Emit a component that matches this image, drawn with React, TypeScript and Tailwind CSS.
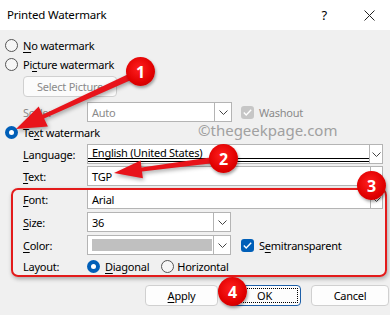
import React from "react";

type P = { children?: React.ReactNode };

const Chevron = () => (
  <svg width="9" height="5" viewBox="0 0 9 5">
    <polyline points="0.5,0.5 4.5,4.5 8.5,0.5" fill="none" stroke="#444" strokeWidth="1" />
  </svg>
);

const Check = () => (
  <svg width="9" height="7" viewBox="0 0 9 7">
    <polyline points="0.8,3.6 3.2,6 8.2,0.8" fill="none" stroke="#fff" strokeWidth="1.4" />
  </svg>
);

function Radio({ checked }: { checked?: boolean }) {
  if (checked)
    return (
      <span className="w-[13px] h-[13px] rounded-full bg-[#005fb8] flex items-center justify-center shrink-0">
        <span className="w-[5px] h-[5px] rounded-full bg-white" />
      </span>
    );
  return <span className="block w-[13px] h-[13px] rounded-full border border-[#555] bg-[#f6f6f6] shrink-0" />;
}

function Combo({ w, arrowW = 17, disabled, children }: P & { w: string; arrowW?: number; disabled?: boolean }) {
  return (
    <div className={`flex h-full ${w}`}>
      <div className={`flex-1 flex items-center border border-[#b4b4b4] bg-white pl-[4px] ${disabled ? "text-[#8a8a8a]" : "text-black"}`}>
        {children}
      </div>
      <div
        className={`-ml-px flex items-center justify-center border border-[#b4b4b4] bg-white ${arrowW === 13 ? "w-[13px]" : "w-[18px]"}`}
      >
        <Chevron />
      </div>
    </div>
  );
}

function Row({ label, children, className = "" }: P & { label: React.ReactNode; className?: string }) {
  return (
    <div className={`flex items-center h-[20px] pl-[18px] ${className}`}>
      <span className="w-[64px] shrink-0">{label}</span>
      {children}
    </div>
  );
}

const U = ({ children }: P) => <span className="underline underline-offset-2">{children}</span>;

function arrow(x1: number, y1: number, x2: number, y2: number, w1: number, w2: number, hl: number, hw: number) {
  const L = Math.hypot(x2 - x1, y2 - y1);
  const ux = (x2 - x1) / L, uy = (y2 - y1) / L;
  const nx = -uy, ny = ux;
  const bx = x2 - ux * hl, by = y2 - uy * hl;
  const p = (x: number, y: number) => `${x.toFixed(1)},${y.toFixed(1)}`;
  return [
    p(x1 + nx * w1, y1 + ny * w1),
    p(bx + nx * w2, by + ny * w2),
    p(bx + nx * hw, by + ny * hw),
    p(x2, y2),
    p(bx - nx * hw, by - ny * hw),
    p(bx - nx * w2, by - ny * w2),
    p(x1 - nx * w1, y1 - ny * w1),
  ].join(" ");
}

function Badge({ n, className }: { n: number; className: string }) {
  return (
    <div
      className={`absolute w-[29px] h-[29px] rounded-full bg-[radial-gradient(circle_at_45%_40%,#ff2020,#e00000_60%,#b80000)] shadow-[1px_2px_3px_rgba(0,0,0,0.35)] flex items-center justify-center text-white text-[16px] font-bold ${className}`}
    >
      {n}
    </div>
  );
}

export default function App() {
  return (
    <div className="relative w-[390px] h-[315px] overflow-hidden bg-[#f0f0f0] font-['Noto_Sans',sans-serif] text-[11px] tracking-[-0.25px] text-black leading-none">
      {/* title bar */}
      <div className="h-[30px] bg-white flex items-center pl-[7px]">
        <span className="text-[11.5px] tracking-[-0.2px]">Printed Watermark</span>
        <span className="ml-auto text-[13px] mr-[37px]">?</span>
        <svg width="11" height="11" viewBox="0 0 11 11" className="mr-[15px]">
          <path d="M0.5 0.5 L10.5 10.5 M10.5 0.5 L0.5 10.5" stroke="#222" strokeWidth="1" />
        </svg>
      </div>

      <div className="pl-[5px] pt-[6px]">
        <div className="flex items-center gap-[5px] h-[19px]">
          <Radio />
          <span><U>N</U>o watermark</span>
        </div>
        <div className="flex items-center gap-[5px] h-[19px]">
          <Radio />
          <span>Pi<U>c</U>ture watermark</span>
        </div>
        <div className="pl-[18px] mt-[2px] h-[21px]">
          <div className="w-[94px] h-full rounded-[4px] border border-[#d0d0d0] bg-[#fbfbfb] text-[#8a8a8a] flex items-center justify-center">
            Select Picture
          </div>
        </div>
        <Row label={<span className="text-[#8a8a8a]">Sca<U>l</U>e:</span>} className="mt-[5px]">
          <Combo w="w-[145px]" disabled>Auto</Combo>
          <span className="ml-[9px] w-[13px] h-[13px] rounded-[3px] bg-[#c6c6c6] flex items-center justify-center">
            <Check />
          </span>
          <span className="ml-[5px] text-[#8a8a8a]">Washout</span>
        </Row>
        <div className="flex items-center gap-[5px] h-[20px]">
          <Radio checked />
          <span>Te<U>x</U>t watermark</span>
        </div>
        <Row label={<><U>L</U>anguage:</>} className="mt-[2px]">
          <div className="relative flex h-full w-[296px]">
            <div className="flex-1 flex items-center border border-[#b4b4b4] bg-white pl-[4px] pb-[3px]">
              English (United States)
            </div>
            <div className="absolute left-[1px] right-[14px] bottom-[2px] h-[4px] border-t border-b border-black" />
            <div className="-ml-px w-[14px] flex items-center justify-center border border-[#b4b4b4] bg-white">
              <Chevron />
            </div>
          </div>
        </Row>
        <Row label={<><U>T</U>ext:</>} className="mt-[2px]">
          <Combo w="w-[296px]" arrowW={13}>TGP</Combo>
        </Row>
        <Row label={<><U>F</U>ont:</>} className="mt-[3px]">
          <Combo w="w-[296px]" arrowW={13}>Arial</Combo>
        </Row>
        <Row label={<><U>S</U>ize:</>} className="mt-[3px]">
          <Combo w="w-[144px]">36</Combo>
        </Row>
        <Row label={<><U>C</U>olor:</>} className="mt-[3px]">
          <Combo w="w-[144px]">
            <span className="block h-[12px] w-[120px] bg-[#c0c0c0]" />
          </Combo>
          <span className="ml-[10px] w-[13px] h-[13px] rounded-[3px] bg-[#005fb8] flex items-center justify-center">
            <Check />
          </span>
          <span className="ml-[5px]">S<U>e</U>mitransparent</span>
        </Row>
        <Row label="Layout:" className="h-[22px]">
          <Radio checked />
          <span className="ml-[5px]"><U>D</U>iagonal</span>
          <span className="ml-[12px]"><Radio /></span>
          <span className="ml-[3px]">Horizontal</span>
        </Row>
        <div className="flex mt-[8px] h-[21px] pl-[140px] gap-[10px]">
          <div className="w-[73px] rounded-[4px] border border-[#d0d0d0] bg-[#fdfdfd] flex items-center justify-center">
            <U>A</U>pply
          </div>
          <div className="w-[73px] rounded-[4px] border border-[#1d5fa8] bg-[#fdfdfd] p-[2px]">
            <div className="h-full border border-dotted border-black flex items-center justify-center">OK</div>
          </div>
          <div className="w-[78px] rounded-[4px] border border-[#d0d0d0] bg-[#fdfdfd] flex items-center justify-center">
            Cancel
          </div>
        </div>
      </div>

      {/* annotations */}
      <span className="absolute left-[198px] top-[123px] text-[15px] tracking-normal text-[#a0a0a0]">
        ©thegeekpage.com
      </span>
      <div className="absolute left-[11px] top-[188px] w-[376px] h-[89px] rounded-[7px] border-2 border-[#e31b1b] shadow-[1px_2px_4px_rgba(0,0,0,0.3)]" />
      <svg className="absolute left-0 top-0 drop-shadow-[1px_2px_2px_rgba(0,0,0,0.35)]" width="390" height="315">
        <polygon points={arrow(132, 76, 16, 129, 3.2, 2, 30, 11)} fill="#e8141b" />
        <polygon points={arrow(214, 160, 114, 173, 3, 2, 28, 9)} fill="#e8141b" />
      </svg>
      <Badge n={1} className="left-[126px] top-[57px] tracking-normal" />
      <Badge n={2} className="left-[209px] top-[144px] tracking-normal" />
      <Badge n={3} className="left-[357px] top-[171px] tracking-normal" />
      <Badge n={4} className="left-[218px] top-[277px] tracking-normal" />
    </div>
  );
}
